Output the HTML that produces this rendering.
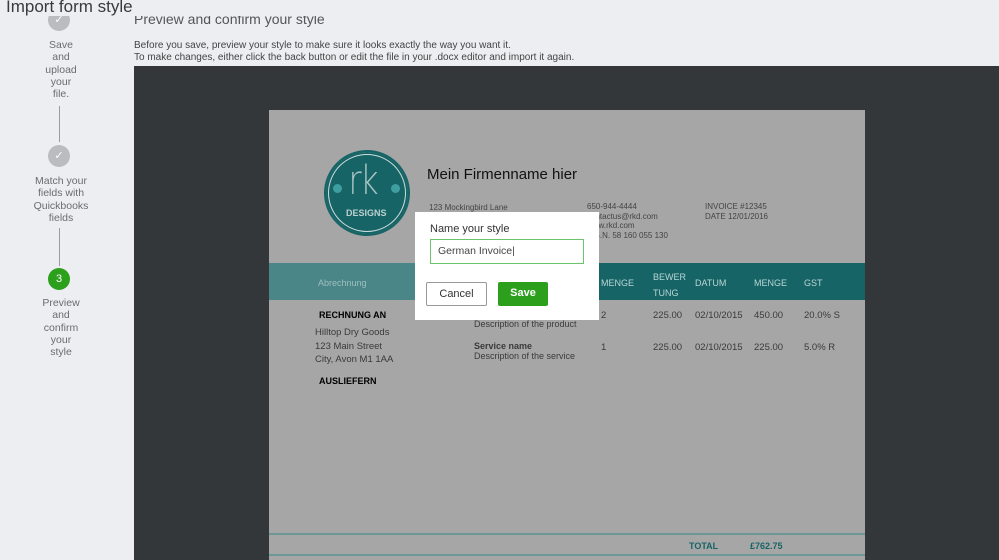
<!DOCTYPE html>
<html><head><meta charset="utf-8"><style>
*{margin:0;padding:0;box-sizing:border-box}
body{width:999px;height:560px;overflow:hidden;background:#eceef1;font-family:"Liberation Sans",sans-serif;position:relative;color:#393a3d}
.a{position:absolute;white-space:nowrap}
.step{position:absolute;width:60px;left:31px;text-align:center;font-size:10.5px;line-height:12.3px;color:#6b6c72}
.vl{position:absolute;left:59px;width:1px;background:#9a9ca0}
.circ{position:absolute;left:48px;width:22px;height:22px;border-radius:50%;background:#babcc0;color:#fff;text-align:center;font-size:11px;line-height:22px}
.p{font-size:8px;color:#444}
.h{font-size:9px;color:#b8d6d6}
.r{font-size:9.5px;color:#3a3a3a}
</style></head><body>
<div class="circ" style="top:9px">✓</div>
<div class="a" style="left:0;top:0;width:999px;height:16px;background:#eceef1"></div>
<div class="a" style="left:6px;top:-3px;font-size:17px;color:#3a3a3d">Import form style</div>
<div class="step" style="top:39px">Save<br>and<br>upload<br>your<br>file.</div>
<div class="vl" style="top:106px;height:36px"></div>
<div class="circ" style="top:145px">✓</div>
<div class="step" style="top:175px">Match your<br>fields with<br>Quickbooks<br>fields</div>
<div class="vl" style="top:228px;height:38px"></div>
<div class="circ" style="top:268px;background:#2ca01c">3</div>
<div class="step" style="top:297px">Preview<br>and<br>confirm<br>your<br>style</div>

<div class="a" style="left:134px;top:16px;height:14px;overflow:hidden;width:300px"><div class="a" style="left:0;top:-5px;font-size:14px;color:#555">Preview and confirm your style</div></div>
<div class="a" style="left:134px;top:40px;font-size:10px;line-height:12px;color:#444">Before you save, preview your style to make sure it looks exactly the way you want it.<br>To make changes, either click the back button or edit the file in your .docx editor and import it again.</div>

<div class="a" style="left:134px;top:66px;width:865px;height:494px;background:#343739"></div>
<div class="a" style="left:269px;top:110px;width:596px;height:450px;background:#a6a6a6"></div>
<div class="a" style="left:324px;top:150px;width:86px;height:86px;border-radius:50%;background:#176466;border:2px solid #176466;box-shadow:inset 0 0 0 2px #176466,inset 0 0 0 3px #cfdede"></div>
<div class="a" style="left:345px;top:158px;font-size:40px;color:#a8c4c4;font-weight:100;font-family:'DejaVu Sans';letter-spacing:-2px;transform:scaleX(.8)">rk</div>
<div class="a" style="left:333px;top:184px;width:9px;height:9px;border-radius:50%;background:#3e9ea0"></div>
<div class="a" style="left:391px;top:184px;width:9px;height:9px;border-radius:50%;background:#3e9ea0"></div>
<div class="a" style="left:346px;top:208px;font-size:9px;font-weight:bold;color:#bcd0d0">DESIGNS</div>
<div class="a" style="left:427px;top:166px;font-size:15px;color:#111">Mein Firmenname hier</div>
<div class="a p" style="left:429px;top:203px">123 Mockingbird Lane</div>
<div class="a p" style="left:587px;top:202px;line-height:9.5px">650-944-4444<br>contactus@rkd.com<br>www.rkd.com<br>A.B.N. 58 160 055 130</div>
<div class="a p" style="left:705px;top:202px;line-height:9.5px">INVOICE #12345<br>DATE 12/01/2016</div>

<div class="a" style="left:269px;top:263px;width:596px;height:37px;background:#176466"></div>
<div class="a" style="left:269px;top:263px;width:200px;height:37px;background:#4a8587"></div>
<div class="a h" style="left:318px;top:278px;color:#9ec0c0">Abrechnung</div>
<div class="a h" style="left:601px;top:278px">MENGE</div>
<div class="a h" style="left:653px;top:269px;line-height:16px">BEWER<br>TUNG</div>
<div class="a h" style="left:695px;top:278px">DATUM</div>
<div class="a h" style="left:754px;top:278px">MENGE</div>
<div class="a h" style="left:804px;top:278px">GST</div>

<div class="a" style="left:319px;top:310px;font-size:9px;font-weight:bold;color:#000">RECHNUNG AN</div>
<div class="a r" style="left:315px;top:326px;line-height:13.5px">Hilltop Dry Goods<br>123 Main Street<br>City, Avon M1 1AA</div>
<div class="a" style="left:319px;top:376px;font-size:9px;font-weight:bold;color:#000">AUSLIEFERN</div>
<div class="a r" style="left:474px;top:319px;font-size:9px">Description of the product</div>
<div class="a r" style="left:474px;top:342px;font-size:9px;line-height:9.5px"><b>Service name</b><br>Description of the service</div>
<div class="a r" style="left:601px;top:310px">2</div>
<div class="a r" style="left:653px;top:310px">225.00</div>
<div class="a r" style="left:695px;top:310px">02/10/2015</div>
<div class="a r" style="left:754px;top:310px">450.00</div>
<div class="a r" style="left:804px;top:310px">20.0% S</div>
<div class="a r" style="left:601px;top:342px">1</div>
<div class="a r" style="left:653px;top:342px">225.00</div>
<div class="a r" style="left:695px;top:342px">02/10/2015</div>
<div class="a r" style="left:754px;top:342px">225.00</div>
<div class="a r" style="left:804px;top:342px">5.0% R</div>

<div class="a" style="left:269px;top:533px;width:596px;height:2px;background:#6d9696"></div>
<div class="a" style="left:269px;top:554px;width:596px;height:2px;background:#6d9696"></div>
<div class="a" style="left:689px;top:541px;font-size:9px;font-weight:bold;color:#176466">TOTAL</div>
<div class="a" style="left:750px;top:541px;font-size:9px;font-weight:bold;color:#176466">£762.75</div>

<div class="a" style="left:415px;top:212px;width:184px;height:108px;background:#fff"></div>
<div class="a" style="left:430px;top:223px;font-size:11px;color:#333">Name your style</div>
<div class="a" style="left:430px;top:239px;width:154px;height:25px;border:1px solid #6cc46c"></div>
<div class="a" style="left:438px;top:245px;font-size:10.5px;color:#444">German Invoice|</div>
<div class="a" style="left:426px;top:282px;width:61px;height:24px;border:1px solid #999;border-radius:2px;font-size:11px;text-align:center;line-height:22px;color:#333">Cancel</div>
<div class="a" style="left:498px;top:282px;width:50px;height:24px;background:#2ca01c;border-radius:2px;font-size:11px;font-weight:bold;text-align:center;line-height:23px;color:#fff">Save</div>
</body></html>
